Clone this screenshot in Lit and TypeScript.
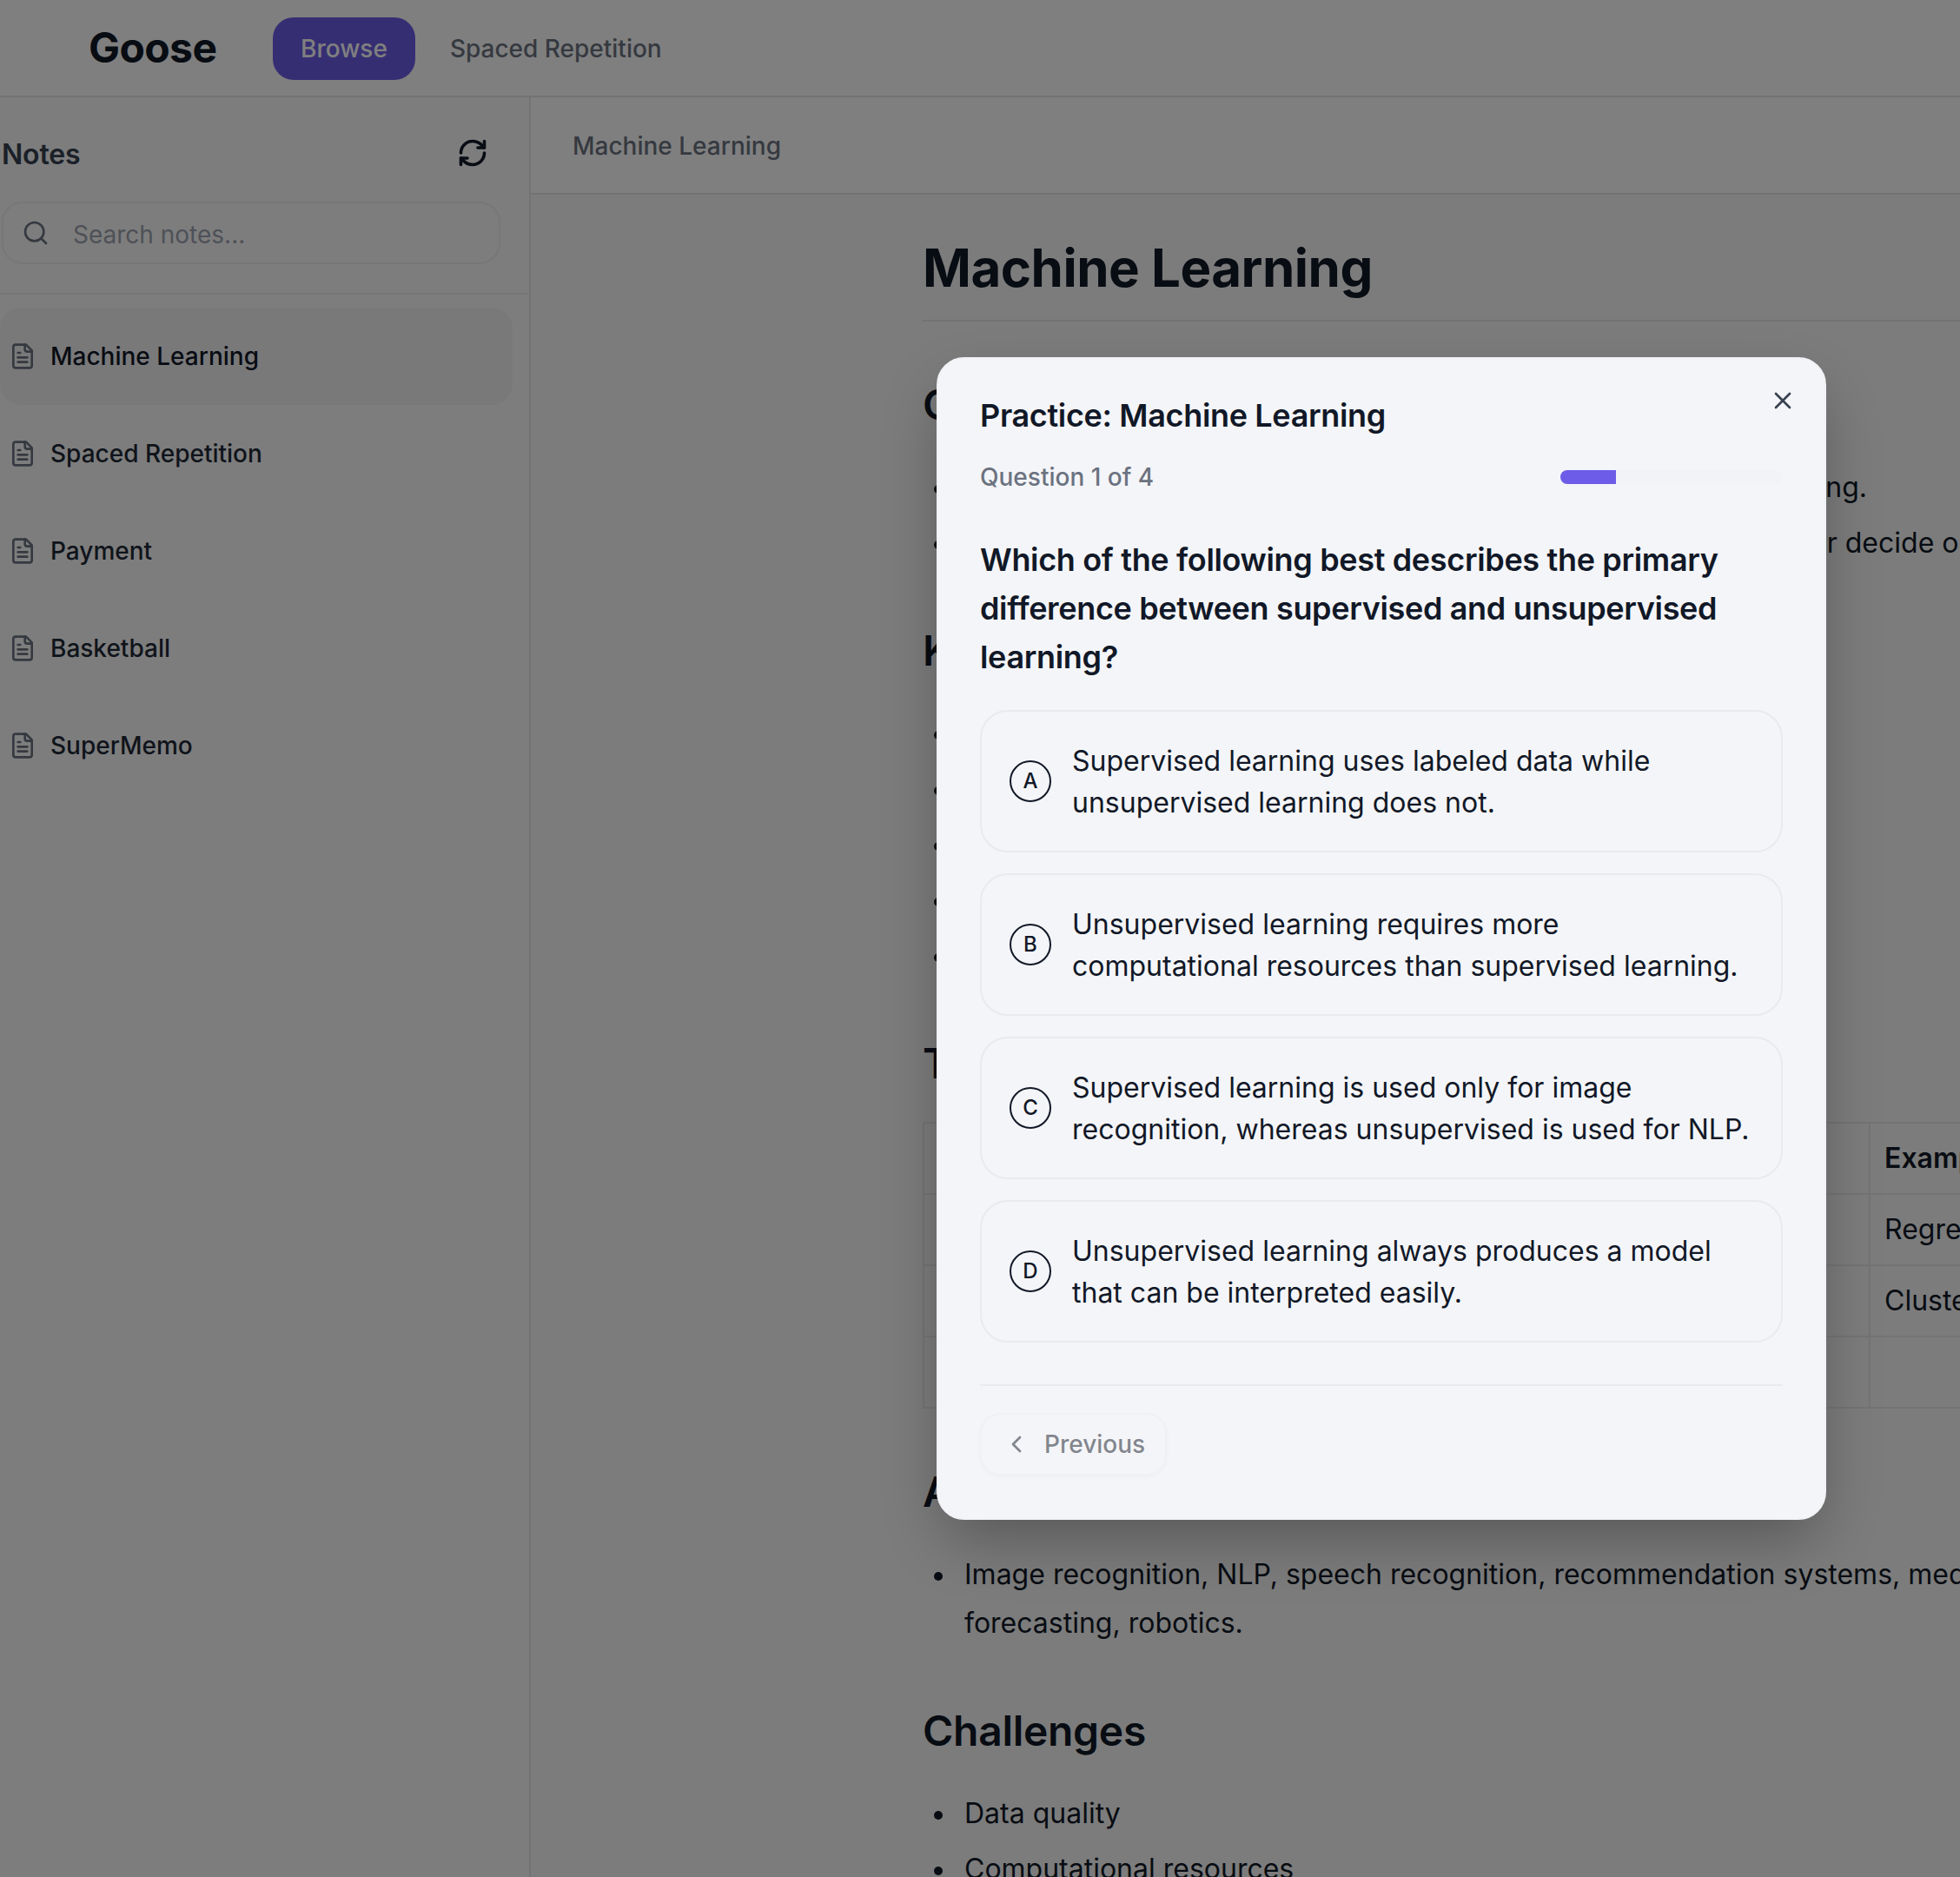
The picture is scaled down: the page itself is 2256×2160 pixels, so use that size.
import { LitElement, html, css, svg } from "lit";
import { customElement } from "lit/decorators.js";

const ic = (paths: unknown, cls = "") => html`<svg class="ic ${cls}" viewBox="0 0 24 24" fill="none" stroke="currentColor" stroke-width="2" stroke-linecap="round" stroke-linejoin="round">${paths}</svg>`;
const fileIcon = svg`<path d="M15 2H6a2 2 0 0 0-2 2v16a2 2 0 0 0 2 2h12a2 2 0 0 0 2-2V7Z"/><path d="M14 2v4a2 2 0 0 0 2 2h4"/><path d="M10 9H8"/><path d="M16 13H8"/><path d="M16 17H8"/>`;
const refresh = svg`<path d="M3 12a9 9 0 0 1 9-9 9.75 9.75 0 0 1 6.74 2.74L21 8"/><path d="M21 3v5h-5"/><path d="M21 12a9 9 0 0 1-9 9 9.75 9.75 0 0 1-6.74-2.74L3 16"/><path d="M8 16H3v5"/>`;
const search = svg`<circle cx="11" cy="11" r="8"/><path d="m21 21-4.3-4.3"/>`;
const close = svg`<path d="M18 6 6 18"/><path d="m6 6 12 12"/>`;
const chevron = svg`<path d="m15 18-6-6 6-6"/>`;

const notes = ["Machine Learning", "Spaced Repetition", "Payment", "Basketball", "SuperMemo"];
const options = [
  ["A", "Supervised learning uses labeled data while unsupervised learning does not."],
  ["B", "Unsupervised learning requires more computational resources than supervised learning."],
  ["C", "Supervised learning is used only for image recognition, whereas unsupervised is used for NLP."],
  ["D", "Unsupervised learning always produces a model that can be interpreted easily."],
];

@customElement("app-root")
export class AppRoot extends LitElement {
  static styles = css`
    :host { display: block; position: relative; width: 2256px; height: 2160px; overflow: hidden; background: #fff; font-family: Inter, "Liberation Sans", sans-serif; color: #111827; }
    .ic { width: 32px; height: 32px; flex: none; display: block; }
    header { height: 108px; padding-top: 2px; border-bottom: 2px solid #e5e7eb; display: flex; align-items: center; padding-left: 102px; box-sizing: content-box; }
    .logo { font-size: 48px; font-weight: 700; line-height: 64px; letter-spacing: -0.6px; margin: 0 64px 3px 0; width: 148px; color: #111827; }
    .tab { font-size: 28px; font-weight: 500; line-height: 40px; padding: 16px 32px; border-radius: 24px; color: #6b7280; margin-right: 8px; }
    .tab.on { background: #6c5ce7; color: #fff; }
    .body { display: flex; height: 2048px; }
    aside { width: 609px; flex: none; border-right: 2px solid #e5e7eb; background: #fafafa; }
    .side-top { padding: 40px 33px 32px 2px; border-bottom: 2px solid #ececee; height: 153px; box-sizing: content-box; }
    .side-head { display: flex; justify-content: space-between; align-items: center; height: 50px; }
    .side-head span { font-size: 32px; font-weight: 600; color: #374151; letter-spacing: -0.2px; }
    .side-head .ic { color: #111827; width: 36px; height: 36px; margin-right: 14px; stroke-width: 2.4; margin-top: -2px; }
    .search { margin-top: 30px; height: 72px; box-sizing: border-box; border: 2px solid #eceef0; border-radius: 24px; display: flex; align-items: center; gap: 27px; padding-left: 21px; font-size: 28px; color: #9ca3af; }
    .search .ic { color: #6b7280; }
    .search span { padding-top: 3px; }
    .list { padding: 15px 19px 0 0; display: flex; flex-direction: column; }
    .item { height: 112px; display: flex; align-items: center; gap: 16px; padding-left: 10px; font-size: 28px; font-weight: 500; color: #1f2937; border-radius: 24px; }
    .item .ic { color: #6b7280; }
    .item.on { background: #f2f2f4; color: #111827; }
    main { flex: 1; min-width: 0; background: #f8f8f8; }
    .crumb { border-bottom: 2px solid #e5e7eb; background: #fff; display: flex; align-items: flex-start; padding: 36px 0 0 48px; box-sizing: border-box; height: 112px; font-size: 28px; font-weight: 500; line-height: 40px; color: #6b7280; }
    .doc { width: 1500px; margin-left: 451px; padding-top: 48px; }
    h1 { margin: 0; font-size: 60px; line-height: 72px; font-weight: 700; padding-bottom: 24px; border-bottom: 2px solid #e5e7eb; letter-spacing: -0.5px; }
    h2 { margin: 64px 0 35px; font-size: 48px; line-height: 64px; font-weight: 600; letter-spacing: -0.3px; }
    ul { margin: 0; padding: 0 0 0 48px; list-style: none; font-size: 32px; line-height: 56px; color: #111827; }
    li { margin-bottom: 8px; position: relative; }
    li::before { content: ""; position: absolute; left: -35px; top: 25px; width: 10px; height: 10px; border-radius: 50%; background: #111827; }
    table { border-collapse: collapse; table-layout: fixed; width: 1500px; font-size: 32px; line-height: 56px; color: #111827; }
    th, td { border: 2px solid #e9e9eb; padding: 12px 16px; text-align: left; height: 82px; box-sizing: border-box; white-space: nowrap; }
    th { font-weight: 600; background: #f8f8f9; color: #111827; }
    .c1 { width: 1089px; }
    .overlay { position: absolute; inset: 0; background: rgba(0,0,0,.5); }
    .modal { position: absolute; left: 1078px; top: 411px; width: 1024px; height: 1338px; box-sizing: border-box; padding: 48px; border: 2px solid #f1f2f5; border-radius: 32px; background: #f4f5f8; box-shadow: 0 30px 70px -10px rgba(0,0,0,.3); display: flex; flex-direction: column; }
    .x { position: absolute; top: 32px; right: 32px; color: #374151; }
    .title { margin-top: -1px; font-size: 36px; line-height: 36px; font-weight: 600; letter-spacing: -0.34px; color: #111827; }
    .prog { margin-top: 33px; display: flex; justify-content: space-between; align-items: center; height: 40px; font-size: 28px; line-height: 40px; color: #6b7280; font-weight: 500; }
    .track { width: 256px; height: 16px; border-radius: 16px; overflow: hidden; background: #f2f3f6; }
    .fill { height: 100%; background: #6c5ce7; }
    .q { margin-top: 47px; font-size: 36px; line-height: 56px; font-weight: 600; color: #111827; letter-spacing: -0.34px; }
    .opts { margin-top: 33px; display: flex; flex-direction: column; gap: 24px; }
    .opt { height: 164px; box-sizing: border-box; border: 2px solid #e8eaee; border-radius: 32px; padding: 0 32px; display: flex; align-items: center; gap: 24px; font-size: 32px; line-height: 48px; color: #111827; }
    .opt-text { padding-top: 2px; }
    .badge { width: 48px; height: 48px; flex: none; box-sizing: border-box; border: 2px solid #111827; border-radius: 50%; display: flex; align-items: center; justify-content: center; font-size: 24px; font-weight: 500; line-height: 1; }
    .foot { margin-top: 48px; border-top: 2px solid #e8eaee; padding-top: 32px; }
    .prev { display: inline-flex; align-items: center; gap: 16px; height: 72px; box-sizing: border-box; padding: 0 24px; margin-top: -1px; border: 2px solid #eceef1; border-radius: 24px; font-size: 28px; font-weight: 500; color: #111827; opacity: .5; width: 215px; box-shadow: 0 2px 4px rgba(0,0,0,.04); }
  `;

  render() {
    return html`
      <header>
        <div class="logo">Goose</div>
        <div class="tab on">Browse</div>
        <div class="tab">Spaced Repetition</div>
      </header>
      <div class="body">
        <aside>
          <div class="side-top">
            <div class="side-head"><span>Notes</span>${ic(refresh)}</div>
            <div class="search">${ic(search)}<span>Search notes...</span></div>
          </div>
          <div class="list">
            ${notes.map((n, i) => html`<div class="item ${i === 0 ? "on" : ""}">${ic(fileIcon)}${n}</div>`)}
          </div>
        </aside>
        <main>
          <div class="crumb">Machine Learning</div>
          <div class="doc">
            <h1>Machine Learning</h1>
            <h2>Overview</h2>
            <ul>
              <li>Machine learning lets systems learn from data without programming.</li>
              <li>Algorithms find patterns in training data and use them to predict or decide on new data.</li>
            </ul>
            <h2>Key Concepts</h2>
            <ul>
              <li>Training data</li><li>Features</li><li>Labels</li><li>Models</li><li>Evaluation</li>
            </ul>
            <h2>Types</h2>
            <table>
              <tr><th class="c1">Type</th><th>Examples</th></tr>
              <tr><td>Supervised</td><td>Regression</td></tr>
              <tr><td>Unsupervised</td><td>Clustering</td></tr>
              <tr><td>Reinforcement</td><td></td></tr>
            </table>
            <h2>Applications</h2>
            <ul>
              <li>Image recognition, NLP, speech recognition, recommendation systems, medical diagnosis, forecasting, robotics.</li>
            </ul>
            <h2>Challenges</h2>
            <ul>
              <li>Data quality</li><li>Computational resources</li>
            </ul>
          </div>
        </main>
      </div>
      <div class="overlay"></div>
      <div class="modal">
        <div class="x">${ic(close)}</div>
        <div class="title">Practice: Machine Learning</div>
        <div class="prog"><span>Question 1 of 4</span><div class="track"><div class="fill" style="width:25%"></div></div></div>
        <div class="q">Which of the following best describes the primary difference between supervised and unsupervised learning?</div>
        <div class="opts">
          ${options.map(([k, t]) => html`<div class="opt"><div class="badge">${k}</div><div class="opt-text">${t}</div></div>`)}
        </div>
        <div class="foot"><div class="prev">${ic(chevron)}Previous</div></div>
      </div>
    `;
  }
}
